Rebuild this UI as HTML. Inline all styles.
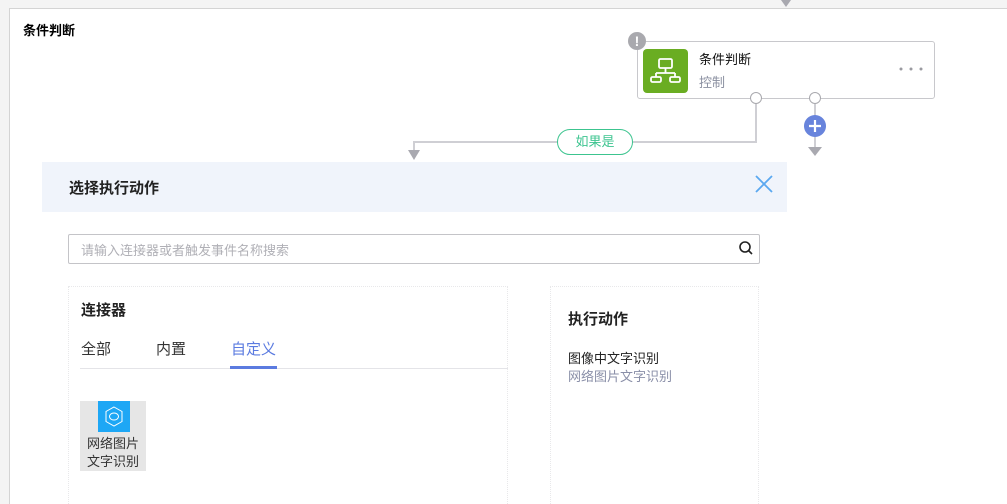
<!DOCTYPE html>
<html><head><meta charset="utf-8"><style>
*{margin:0;padding:0;box-sizing:border-box}
html,body{width:1007px;height:504px;overflow:hidden}
body{background:#f4f4f4;font-family:"Liberation Sans","Noto Sans CJK SC",sans-serif;position:relative}
.a{position:absolute}
</style></head><body>
<div class="a" style="left:9px;top:8px;width:998px;height:496px;background:#fff;border-left:1px solid #d4d4d4;border-top:1px solid #d4d4d4"></div>
<div class="a" style="left:23px;top:20px;font-size:13px;font-weight:bold;color:#000">条件判断</div>
<svg class="a" style="left:0;top:0" width="1007" height="504">
<polygon points="781,0 791,0 786,7" fill="#a9a9b0"/>
<polyline points="756,97 756,142 414,142 414,152" fill="none" stroke="#cfcfd4" stroke-width="2"/>
<polygon points="408,150 420,150 414,160" fill="#a9a9b0"/>
<line x1="815" y1="98" x2="815" y2="148" stroke="#cfcfd4" stroke-width="2"/>
<polygon points="808,147 822,147 815,156" fill="#a9a9b0"/>
</svg>
<div class="a" style="left:637px;top:41px;width:298px;height:58px;border:1px solid #c8c8cc;border-radius:3px;background:#fff"></div>
<div class="a" style="left:628px;top:32px;width:18px;height:18px;border-radius:50%;background:#a9a9ae;color:#fff;font-size:14px;font-weight:bold;text-align:center;line-height:18px">!</div>
<div class="a" style="left:643px;top:49px;width:45px;height:44px;border-radius:4px;background:#6aad22"></div>
<svg class="a" style="left:643px;top:49px" width="45" height="44" fill="none" stroke="#fff" stroke-width="1.8">
<rect x="16" y="10" width="13" height="9" rx="1.5"/><path d="M22.5 19v5M13 24h19M13 24v4M32 24v4"/><rect x="8" y="28" width="10" height="5" rx="1.5"/><rect x="27" y="28" width="10" height="5" rx="1.5"/>
</svg>
<div class="a" style="left:699px;top:49px;font-size:13px;color:#111">条件判断</div>
<div class="a" style="left:699px;top:72px;font-size:13px;color:#8a8fa0">控制</div>
<svg class="a" style="left:898px;top:66px" width="28" height="6" fill="#9a9aa0"><circle cx="3" cy="3" r="1.5"/><circle cx="13" cy="3" r="1.5"/><circle cx="23" cy="3" r="1.5"/></svg>
<div class="a" style="left:750px;top:92px;width:12px;height:12px;border-radius:50%;border:1.5px solid #a9a9ae;background:#fff"></div>
<div class="a" style="left:809px;top:92px;width:12px;height:12px;border-radius:50%;border:1.5px solid #a9a9ae;background:#fff"></div>
<div class="a" style="left:804px;top:115px;width:22px;height:22px;border-radius:50%;background:#6884dc"></div>
<svg class="a" style="left:804px;top:115px" width="22" height="22" stroke="#fff" stroke-width="2.2"><path d="M11 5v12M5 11h12"/></svg>
<div class="a" style="left:557px;top:129px;width:76px;height:26px;border:1.5px solid #3cc48f;border-radius:13px;background:#fff;color:#3cc48f;font-size:13px;text-align:center;line-height:23px">如果是</div>
<div class="a" style="left:42px;top:162px;width:745px;height:50px;background:#f0f4fb"></div>
<div class="a" style="left:69px;top:177px;font-size:15px;font-weight:bold;color:#222">选择执行动作</div>
<svg class="a" style="left:754px;top:174px" width="20" height="20" stroke="#5aa8f0" stroke-width="1.8"><path d="M2 2L18 18M18 2L2 18"/></svg>
<div class="a" style="left:68px;top:234px;width:692px;height:30px;border:1px solid #c4c4c8;border-radius:2px"></div>
<div class="a" style="left:81px;top:240px;font-size:13px;color:#b0b0b6">请输入连接器或者触发事件名称搜索</div>
<svg class="a" style="left:738px;top:240px" width="16" height="16" fill="none" stroke="#222" stroke-width="1.6"><circle cx="7" cy="7" r="5"/><path d="M10.5 10.5L14 14"/></svg>
<div class="a" style="left:68px;top:286px;width:440px;height:230px;border:1px dotted #e8e8ea"></div>
<div class="a" style="left:81px;top:299px;font-size:15px;font-weight:bold;color:#222">连接器</div>
<div class="a" style="left:81px;top:338px;font-size:15px;color:#333">全部</div>
<div class="a" style="left:156px;top:338px;font-size:15px;color:#333">内置</div>
<div class="a" style="left:231px;top:338px;font-size:15px;color:#5b7be0">自定义</div>
<div class="a" style="left:80px;top:368px;width:428px;height:1px;background:#e4e4e8"></div>
<div class="a" style="left:230px;top:366px;width:47px;height:3px;background:#5b7be0"></div>
<div class="a" style="left:80px;top:401px;width:66px;height:70px;background:#e6e6e6"></div>
<div class="a" style="left:98px;top:401px;width:32px;height:31px;background:#1ea7f5"></div>
<svg class="a" style="left:98px;top:401px" width="32" height="31" fill="none" stroke="#fff" stroke-width="1"><path d="M16 6L24 10.5v10l-8 4.5-8-4.5v-10z"/><ellipse cx="16" cy="15.5" rx="4.5" ry="3.5"/></svg>
<div class="a" style="left:80px;top:435px;width:66px;text-align:center;font-size:13px;line-height:18px;color:#333">网络图片<br>文字识别</div>
<div class="a" style="left:550px;top:286px;width:209px;height:230px;border:1px dotted #e8e8ea"></div>
<div class="a" style="left:568px;top:308px;font-size:15px;font-weight:bold;color:#222">执行动作</div>
<div class="a" style="left:568px;top:348px;font-size:13px;color:#222">图像中文字识别</div>
<div class="a" style="left:568px;top:366px;font-size:13px;color:#8a8fa8">网络图片文字识别</div>
</body></html>
